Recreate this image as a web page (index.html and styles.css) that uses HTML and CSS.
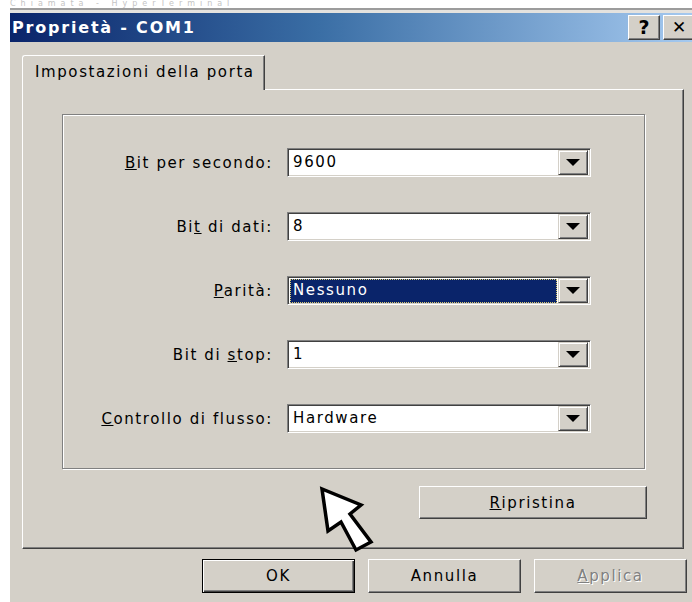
FILE: index.html
```html
<!DOCTYPE html>
<html lang="it">
<head>
<meta charset="utf-8">
<title>Proprietà - COM1</title>
<link rel="stylesheet" href="styles.css">
</head>
<body>
<div class="screen">
  <div class="backdrop"><span>Chiamata - HyperTerminal</span></div>

  <div class="dialog">
    <div class="titlebar">
      <span class="title">Proprietà - COM1</span>
      <span class="tb-btn">?</span>
      <span class="tb-btn close">✕</span>
    </div>

    <div class="content">
      <div class="tabs">
        <div class="tab">Impostazioni della porta</div>
      </div>

      <div class="panel">
        <div class="group">
          <label class="field-label"><u>B</u>it per secondo:</label>
          <div class="combo"><span class="combo-value">9600</span><span class="combo-btn"><i class="tri"></i></span></div>

          <label class="field-label">Bi<u>t</u> di dati:</label>
          <div class="combo"><span class="combo-value">8</span><span class="combo-btn"><i class="tri"></i></span></div>

          <label class="field-label"><u>P</u>arità:</label>
          <div class="combo"><span class="combo-value selected">Nessuno</span><span class="combo-btn"><i class="tri"></i></span></div>

          <label class="field-label">Bit di <u>s</u>top:</label>
          <div class="combo"><span class="combo-value">1</span><span class="combo-btn"><i class="tri"></i></span></div>

          <label class="field-label"><u>C</u>ontrollo di flusso:</label>
          <div class="combo"><span class="combo-value">Hardware</span><span class="combo-btn"><i class="tri"></i></span></div>
        </div>

        <div class="reset-row">
          <button class="btn reset"><u>R</u>ipristina</button>
        </div>
      </div>

      <div class="actions">
        <button class="btn default">OK</button>
        <button class="btn">Annulla</button>
        <button class="btn disabled"><u>A</u>pplica</button>
      </div>
    </div>
  </div>

  <!-- mouse pointer hovering over the dialog -->
  <svg class="pointer" width="80" height="80" viewBox="0 0 80 80">
    <polygon points="12,9 18,51 31,42 46,70 61,62 40,34 51,25" fill="#fff" stroke="#000" stroke-width="3.5" stroke-linejoin="miter"/>
  </svg>
</div>
</body>
</html>
```

FILE: styles.css
```css
* { box-sizing: border-box; }

html, body {
  margin: 0;
  padding: 0;
  background: #fff;
}

.screen {
  position: relative;
  width: 692px;
  height: 602px;
  overflow: hidden;
  background: #fff;
  font-family: "DejaVu Sans", "Verdana", sans-serif;
  font-size: 15px;
  letter-spacing: 1.6px;
  color: #000;
}

/* faint title of the window behind the dialog */
.backdrop {
  height: 8px;
  overflow: hidden;
  padding-left: 10px;
  color: #c4c4c4;
  font-size: 8px;
  line-height: 8px;
  letter-spacing: 5px;
}
.backdrop span {
  display: block;
  white-space: nowrap;
}

.dialog {
  margin-left: 10px;
  width: 686px;
  height: 594px;
  background: #d4d0c8;
  border-top: 2px solid #9c9c9c;
  padding-top: 3px;
  box-shadow: inset 0 3px 0 #e4e2de;
}

.titlebar {
  height: 29px;
  display: flex;
  align-items: center;
  padding-left: 2px;
  background: linear-gradient(to right, #0a246a 0%, #3a6ea5 45%, #a6caf0 100%);
}

.title {
  flex: 1;
  color: #fff;
  font-weight: bold;
  font-size: 16px;
  letter-spacing: 1.8px;
  white-space: nowrap;
}

.tb-btn {
  width: 32px;
  height: 25px;
  margin-right: 3px;
  display: flex;
  align-items: center;
  justify-content: center;
  background: #d4d0c8;
  border: 1px solid;
  border-color: #fff #404040 #404040 #fff;
  box-shadow: inset -1px -1px 0 #808080;
  font-weight: bold;
  font-size: 19px;
  letter-spacing: 0;
  line-height: 1;
}
.tb-btn.close {
  margin-right: 1px;
  font-size: 17px;
}

.tabs {
  display: flex;
  margin-top: 13px;
  padding-left: 12px;
}

.tab {
  position: relative;
  z-index: 1;
  width: 243px;
  height: 35px;
  margin-bottom: -1px;
  padding-left: 12px;
  line-height: 33px;
  background: #d4d0c8;
  border-top: 1px solid #fff;
  border-left: 1px solid #fff;
  border-right: 1px solid #404040;
  border-top-left-radius: 3px;
  box-shadow: inset -1px 0 0 #808080;
  white-space: nowrap;
}

.panel {
  margin-left: 12px;
  width: 662px;
  height: 460px;
  border-top: 1px solid #fff;
  border-left: 1px solid #fff;
  border-right: 1px solid #404040;
  border-bottom: 1px solid #404040;
  box-shadow: inset -1px -1px 0 #808080;
  padding: 24px 0 0 39px;
}

.group {
  width: 583px;
  height: 355px;
  border: 1px solid #808080;
  box-shadow: 1px 1px 0 #fff, inset 1px 1px 0 #fff;
  display: grid;
  grid-template-columns: 210px 304px;
  grid-auto-rows: 29px;
  column-gap: 14px;
  row-gap: 35px;
  align-content: start;
  padding-top: 33px;
}

.field-label {
  justify-self: end;
  align-self: center;
  white-space: nowrap;
}

.combo {
  display: flex;
  align-items: stretch;
  width: 304px;
  height: 29px;
  background: #fff;
  border: 1px solid;
  border-color: #808080 #fff #fff #808080;
  box-shadow: inset 1px 1px 0 #404040, inset -1px -1px 0 #d4d0c8;
  padding: 2px 2px 1px 2px;
}

.combo-value {
  flex: 1;
  padding-left: 3px;
  line-height: 23px;
  white-space: nowrap;
}
.combo-value.selected {
  background: #0a246a;
  color: #fff;
  outline: 1px dotted #d8c870;
  outline-offset: -1px;
  margin-right: 1px;
}

.combo-btn {
  width: 30px;
  display: flex;
  align-items: center;
  justify-content: center;
  background: #d4d0c8;
  border: 1px solid;
  border-color: #d4d0c8 #404040 #404040 #d4d0c8;
  box-shadow: inset 1px 1px 0 #fff, inset -1px -1px 0 #808080;
  margin: -1px 0 0 0;
}

.tri {
  display: block;
  width: 0;
  height: 0;
  border-left: 7px solid transparent;
  border-right: 7px solid transparent;
  border-top: 7px solid #000;
}

.reset-row {
  width: 585px;
  display: flex;
  justify-content: flex-end;
  margin-top: 17px;
}

.btn {
  font: inherit;
  letter-spacing: 1.6px;
  color: #000;
  background: #d4d0c8;
  border: 1px solid;
  border-color: #fff #404040 #404040 #fff;
  box-shadow: inset -1px -1px 0 #808080;
  padding: 0;
  text-align: center;
}

.btn.reset {
  width: 228px;
  height: 33px;
}

.actions {
  display: flex;
  justify-content: flex-end;
  gap: 13px;
  margin-top: 10px;
  padding-right: 9px;
}
.actions .btn {
  width: 153px;
  height: 34px;
}

.btn.default {
  border: 1px solid #000;
  box-shadow: inset 1px 1px 0 #fff, inset -1px -1px 0 #404040, inset -2px -2px 0 #808080;
}

.btn.disabled {
  color: #808080;
  text-shadow: 1px 1px 0 #fff;
}

.pointer {
  position: absolute;
  left: 310px;
  top: 480px;
}
```
